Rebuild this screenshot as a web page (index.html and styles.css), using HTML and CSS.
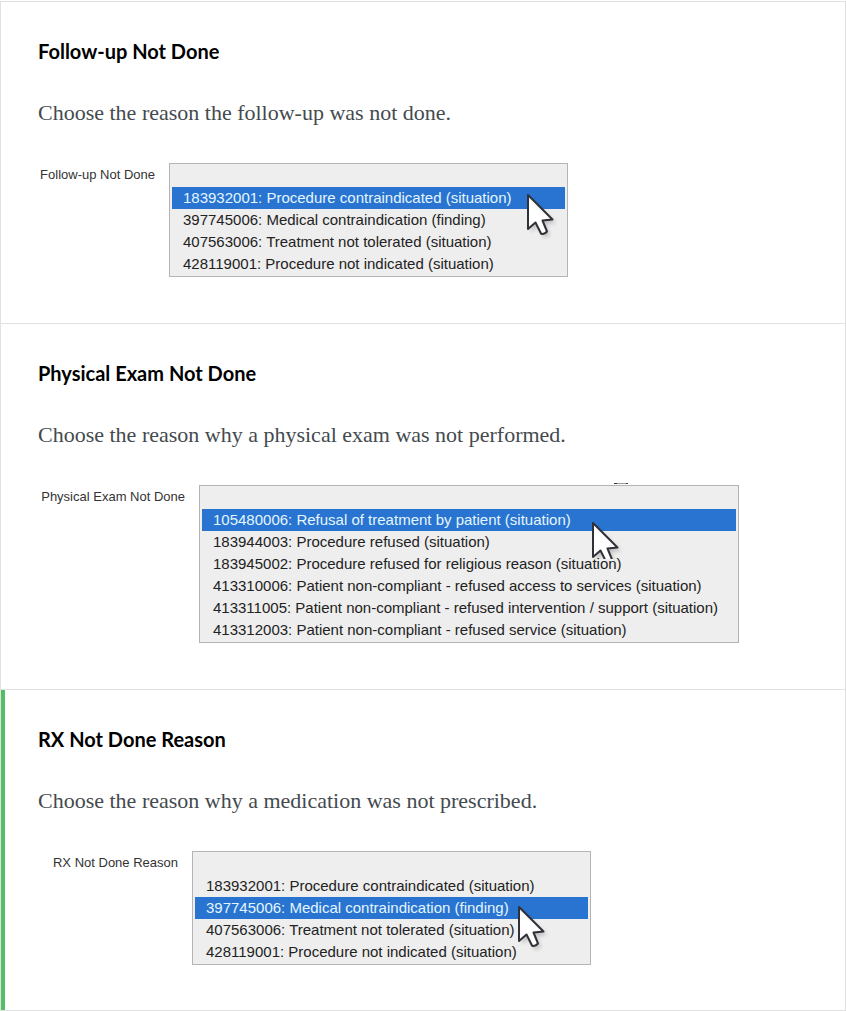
FILE: index.html
```html
<!DOCTYPE html>
<html lang="en">
<head>
  <meta charset="UTF-8" />
  <meta name="viewport" content="width=device-width, initial-scale=1.0"/>
  <title>Not Done Reasons</title>
  <link rel="stylesheet" href="styles.css">
</head>
<body>

  <!-- arrow shape shared by the three lists -->
  <svg class="defs" width="0" height="0" aria-hidden="true">
    <symbol id="pointer" viewBox="0 0 34 48">
      <path class="pointer-shadow" d="M5 6 L5 39 L12 33 L18 45 L24 42 L19 31 L30 30 Z"/>
      <path class="pointer-arrow" d="M2 2 L2 36 L9.500 29.500 L15 40.500 Q18 42 21 38.500 L16.500 27.500 L26.500 26.500 Z"/>
    </symbol>
  </svg>

  <main class="container">
    <section class="block">
      <h3>Follow-up Not Done</h3>
      <p>Choose the reason the follow-up was not done.</p>
      <div class="field">
        <label class="label-followup" for="followup">Follow-up Not Done</label>
        <div class="list">
          <select class="select-short" id="followup" size="5">
            <option value=""></option>
            <option selected>183932001: Procedure contraindicated (situation)</option>
            <option>397745006: Medical contraindication (finding)</option>
            <option>407563006: Treatment not tolerated (situation)</option>
            <option>428119001: Procedure not indicated (situation)</option>
          </select>
          <svg class="pointer pointer-followup" aria-hidden="true"><use href="#pointer" width="34" height="48"/></svg>
        </div>
      </div>
    </section>

    <section class="block">
      <h3>Physical Exam Not Done</h3>
      <p>Choose the reason why a physical exam was not performed.</p>
      <div class="field">
        <label class="label-exam" for="exam">Physical Exam Not Done</label>
        <div class="list list-exam">
          <select class="select-long" id="exam" size="7">
            <option value=""></option>
            <option selected>105480006: Refusal of treatment by patient (situation)</option>
            <option>183944003: Procedure refused (situation)</option>
            <option>183945002: Procedure refused for religious reason (situation)</option>
            <option>413310006: Patient non-compliant - refused access to services (situation)</option>
            <option>413311005: Patient non-compliant - refused intervention / support (situation)</option>
            <option>413312003: Patient non-compliant - refused service (situation)</option>
          </select>
          <svg class="pointer pointer-exam" aria-hidden="true"><use href="#pointer" width="34" height="48"/></svg>
        </div>
      </div>
    </section>

    <section class="block active">
      <h3>RX Not Done Reason</h3>
      <p>Choose the reason why a medication was not prescribed.</p>
      <div class="field">
        <label class="label-rx" for="rx">RX Not Done Reason</label>
        <div class="list">
          <select class="select-short" id="rx" size="5">
            <option value=""></option>
            <option>183932001: Procedure contraindicated (situation)</option>
            <option selected>397745006: Medical contraindication (finding)</option>
            <option>407563006: Treatment not tolerated (situation)</option>
            <option>428119001: Procedure not indicated (situation)</option>
          </select>
          <svg class="pointer pointer-rx" aria-hidden="true"><use href="#pointer" width="34" height="48"/></svg>
        </div>
      </div>
    </section>
  </main>

</body>
</html>
```

FILE: styles.css
```css
body {
  margin: 0;
  background: #fff;
}

.defs {
  position: absolute;
}

.container {
  margin-top: 1px;
  border: 1px solid #e1e1e1;
  border-bottom: none;
}

.block {
  padding: 37px 37px 46px;
  border-bottom: 1px solid #e1e1e1;
}

.block.active {
  padding-bottom: 45px;
  box-shadow: inset 4px 0 #55bd65;
}

h3 {
  margin: 0 0 35px;
  font: bold 20px/24px Lato, sans-serif;
  color: #000;
}

p {
  margin: 0 0 35px;
  font: 22px/30px "Liberation Serif", serif;
  color: #444a4e;
}

.field {
  display: flex;
  align-items: flex-start;
}

label {
  box-sizing: border-box;
  flex: none;
  padding-right: 14px;
  font: 13px/24px "Liberation Sans", Arial, sans-serif;
  color: #333;
  text-align: right;
}

.label-followup {
  width: 131px;
}

.label-exam {
  width: 161px;
}

.label-rx {
  width: 154px;
}

.list {
  position: relative;
  min-width: 0;
}

select {
  display: block;
  box-sizing: border-box;
  max-width: 100%;
  padding: 1px 2px;
  border: 1px solid #b4b4b4;
  border-radius: 0;
  outline: none;
  background: #eee;
  font: 15px/22px "Liberation Sans", Arial, sans-serif;
  color: #222;
  overflow: hidden;
  scrollbar-width: none;
}

.select-short {
  width: 399px;
  height: 114px;
}

.select-long {
  width: 540px;
  height: 158px;
}

option {
  box-sizing: border-box;
  height: 22px;
  min-height: 22px;
  padding: 2px 11px 0;
}

option:checked {
  background: #2874d0 linear-gradient(#2874d0, #2874d0);
  color: #e4f6ff;
}

.pointer {
  position: absolute;
  width: 34px;
  height: 48px;
  pointer-events: none;
}

.pointer-arrow {
  fill: #fff;
  stroke: #303038;
  stroke-width: 2;
  stroke-linejoin: round;
}

.pointer-shadow {
  fill: #000;
  opacity: 0.2;
  filter: blur(2px);
}

.pointer-followup {
  left: 357px;
  top: 30px;
}

.pointer-exam {
  left: 392px;
  top: 36px;
  height: 38px;
}

.pointer-rx {
  left: 325px;
  top: 54px;
}

/* small marks above the list edge */
.list-exam::before {
  content: "";
  position: absolute;
  left: 415px;
  top: -2px;
  width: 9px;
  height: 1px;
  border-left: 3px solid #333;
  border-right: 2px solid #444;
  background: #999;
}
```
